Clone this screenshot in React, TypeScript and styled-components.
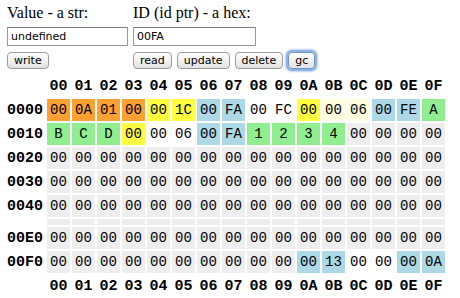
import styled, { createGlobalStyle } from "styled-components"

const GlobalStyle = createGlobalStyle`
  body {
    margin: 0;
    background: #fff;
  }
`

const Page = styled.div`
  padding: 4px 0 0 7px;
`

const Controls = styled.div`
  display: flex;
  gap: 5px;
`

const Field = styled.div<{ $width: number }>`
  display: flex;
  flex-direction: column;
  width: ${(p) => p.$width}px;
`

const Label = styled.div`
  font-family: "Liberation Serif", serif;
  font-size: 16px;
  line-height: 18px;
  color: #000;
`

const TextInput = styled.input<{ $width: number }>`
  box-sizing: border-box;
  width: ${(p) => p.$width}px;
  height: 19px;
  margin: 5px 0 0;
  padding: 0 3px;
  border: 1px solid #9a9a9a;
  border-top-color: #7c7c7c;
  font-family: "DejaVu Sans", sans-serif;
  font-size: 11px;
  color: #000;
  outline: none;
`

const Buttons = styled.div`
  display: flex;
  gap: 5px;
  margin-top: 6px;
`

const Button = styled.button<{ $focused?: boolean }>`
  box-sizing: border-box;
  height: 17px;
  margin: 0;
  padding: 0 6px;
  border: 1px solid ${(p) => (p.$focused ? "#6f93c6" : "#9c9c9c")};
  border-radius: 4px;
  background: linear-gradient(#ffffff, #f0f0f0 55%, #e2e2e2);
  font-family: "DejaVu Sans", sans-serif;
  font-size: 11px;
  line-height: 15px;
  color: #000;
  box-shadow: ${(p) =>
    p.$focused ? "0 0 0 2px #8db2e3, 0 0 2px 3px #b9d1f0" : "none"};
`

const Table = styled.div`
  display: flex;
  flex-direction: column;
  gap: 2px;
  margin-top: 6px;
`

const Row = styled.div<{ $height: number }>`
  display: grid;
  grid-template-columns: 38px repeat(16, 23px);
  column-gap: 2px;
  height: ${(p) => p.$height}px;
`

const HeadCell = styled.div<{ $left?: boolean }>`
  display: flex;
  align-items: center;
  justify-content: ${(p) => (p.$left ? "flex-start" : "center")};
  font-family: "Liberation Mono", monospace;
  font-weight: bold;
  font-size: 15px;
  color: #000;
`

const tones: Record<string, string> = {
  o: "#ffa033",
  y: "#ffff40",
  l: "#ffffe0",
  b: "#add8e6",
  g: "#90ee90",
  w: "transparent",
  z: "#eeeeee",
}

const Cell = styled.div<{ $tone: string }>`
  display: flex;
  align-items: center;
  justify-content: center;
  background: ${(p) => tones[p.$tone]};
  font-family: "Liberation Mono", monospace;
  font-size: 14px;
  color: #000;
`

const cols = Array.from({ length: 16 }, (_, i) =>
  i.toString(16).toUpperCase().padStart(2, "0")
)

const zeros = Array(16).fill("00z").join(" ")

const rows: { label: string; cells: string }[] = [
  {
    label: "0000",
    cells: "00o 0Ao 01o 00o 00y 1Cy 00b FAb 00w FCw 00y 00l 06l 00b FEb Ag",
  },
  {
    label: "0010",
    cells: "Bg Cg Dg 00y 00w 06w 00b FAb 1g 2g 3g 4g 00z 00z 00z 00z",
  },
  { label: "0020", cells: zeros },
  { label: "0030", cells: zeros },
  { label: "0040", cells: zeros },
  { label: "", cells: "" },
  { label: "00E0", cells: zeros },
  {
    label: "00F0",
    cells:
      "00z 00z 00z 00z 00z 00z 00z 00z 00z 00z 00b 13b 00w 00w 00b 0Ab",
  },
]

function HeaderRow() {
  return (
    <Row $height={22}>
      <HeadCell />
      {cols.map((c) => (
        <HeadCell key={c}>{c}</HeadCell>
      ))}
    </Row>
  )
}

function App() {
  return (
    <Page>
      <GlobalStyle />
      <Controls>
        <Field $width={121}>
          <Label>Value - a str:</Label>
          <TextInput $width={121} defaultValue="undefined" />
          <Buttons>
            <Button>write</Button>
          </Buttons>
        </Field>
        <Field $width={190}>
          <Label>ID (id ptr) - a hex:</Label>
          <TextInput $width={123} defaultValue="00FA" />
          <Buttons>
            <Button>read</Button>
            <Button>update</Button>
            <Button>delete</Button>
            <Button $focused>gc</Button>
          </Buttons>
        </Field>
      </Controls>

      <Table>
        <HeaderRow />
        {rows.map((r, i) =>
          r.label ? (
            <Row key={i} $height={22}>
              <HeadCell $left>{r.label}</HeadCell>
              {r.cells.split(" ").map((c, j) => (
                <Cell key={j} $tone={c.slice(-1)}>
                  {c.slice(0, -1)}
                </Cell>
              ))}
            </Row>
          ) : (
            <Row key={i} $height={6}>
              <HeadCell />
              {cols.map((c) => (
                <Cell key={c} $tone="z" />
              ))}
            </Row>
          )
        )}
        <HeaderRow />
      </Table>
    </Page>
  )
}

export default App
